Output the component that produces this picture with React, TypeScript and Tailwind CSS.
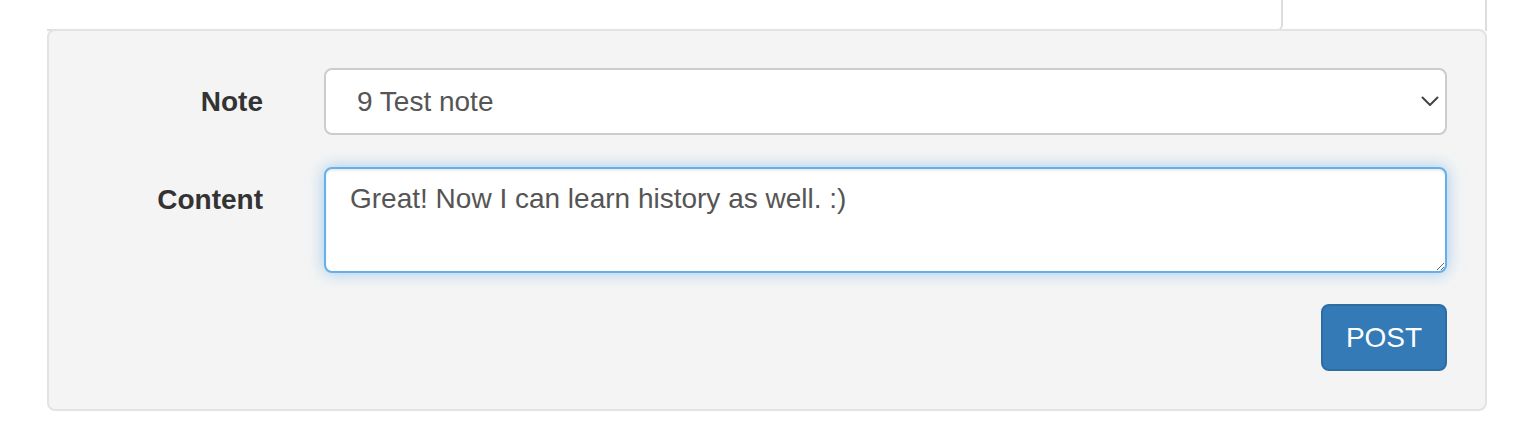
export default function App() {
  return (
    <div className="w-[1534px] h-[432px] bg-white font-['Liberation_Sans',Arial,sans-serif] text-[28px] text-[#333]">
      <div className="flex h-[31px] ml-[47px] w-[1440px]">
        <div className="flex-1 border-b-2 border-r-2 border-[#ddd] rounded-br-[6px]" />
        <div className="w-[204px] border-r-2 border-[#ddd]" />
      </div>
      <section className="relative -mt-[2px] ml-[47px] w-[1440px] h-[382px] border-2 border-[#e3e3e3] rounded-[8px] bg-[#f4f4f4] pt-[37px] pr-[38px]">
        <div className="flex items-center">
          <label className="w-[214px] text-right font-bold leading-[40px]">Note</label>
          <div className="relative flex-1 ml-[61px]">
            <select
              defaultValue="9"
              className="w-full h-[67px] appearance-none bg-white border-2 border-[#ccc] rounded-[8px] pl-[31px] pr-[48px] text-[28px] text-[#555] outline-none"
            >
              <option value="9">9 Test note</option>
            </select>
            <svg
              viewBox="0 0 18 11"
              className="absolute right-[8px] top-0 bottom-0 my-auto w-[18px] h-[11px] pointer-events-none"
              fill="none"
              stroke="#444"
              strokeWidth="2"
              strokeLinecap="round"
              strokeLinejoin="round"
            >
              <polyline points="1.5,1.5 9,9 16.5,1.5" />
            </svg>
          </div>
        </div>
        <div className="flex items-start mt-[32px]">
          <label className="w-[214px] text-right font-bold leading-[40px] pt-[13px]">Content</label>
          <textarea
            defaultValue="Great! Now I can learn history as well. :)"
            className="flex-1 ml-[61px] h-[106px] bg-white border-2 border-[#66afe9] rounded-[8px] px-[24px] pt-[10px] text-[28px] leading-[40px] text-[#555] outline-none shadow-[inset_0_2px_2px_rgba(0,0,0,0.075),0_0_16px_rgba(102,175,233,0.6)]"
          />
        </div>
        <div className="flex justify-end mt-[31px]">
          <button className="w-[126px] h-[67px] bg-[#337ab7] border-2 border-[#2e6da4] rounded-[8px] text-white text-[28px]">
            POST
          </button>
        </div>
      </section>
    </div>
  );
}
